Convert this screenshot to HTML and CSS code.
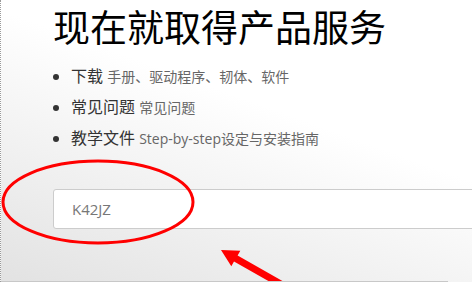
FILE: index.html
```html
<!DOCTYPE html>
<html lang="zh-CN">
<head>
  <meta charset="UTF-8">
  <title>产品服务</title>
  <link rel="stylesheet" href="styles.css">
</head>
<body>
  <div class="page">
    <h1 class="title">现在就取得产品服务</h1>
    <ul class="links">
      <li><span class="main">下载</span> <span class="sub">手册、驱动程序、韧体、软件</span></li>
      <li><span class="main">常见问题</span> <span class="sub">常见问题</span></li>
      <li><span class="main">教学文件</span> <span class="sub">Step-by-step设定与安装指南</span></li>
    </ul>
    <div class="search">
      <input class="search-input" type="text" value="K42JZ">
    </div>

    <svg class="marks" width="472" height="282" viewBox="0 0 472 282">
      <ellipse cx="97" cy="202" rx="95" ry="41" fill="none" stroke="#ff0000" stroke-width="3"/>
      <polygon fill="#ff0000" points="220,250 239.3,250.7 236.6,255.5 292,287 288.5,293 233,261.5 230.3,266.3"/>
    </svg>
  </div>
</body>
</html>
```

FILE: styles.css
```css
body {
  margin: 0;
  padding: 0;
  background: #ffffff;
  font-family: "Open Sans", "Noto Sans CJK SC", sans-serif;
  overflow: hidden;
}

.page {
  position: relative;
  width: 472px;
  height: 282px;
  box-sizing: border-box;
  padding: 8px 0 0 52px;
  border-left: 1px dotted #9a9a9a;
  background: linear-gradient(200deg, #ffffff 40%, #f3f3f3 65%, #e2e2e2 100%);
  overflow: hidden;
}

.page::after {
  content: "";
  position: absolute;
  left: 0;
  bottom: 0;
  width: 447px;
  height: 1px;
  background: #c8c8c8;
}

.title {
  margin: 0;
  font-size: 37px;
  line-height: 40px;
  font-weight: normal;
  color: #000000;
  white-space: nowrap;
}

.links {
  margin: 13px 0 0 0;
  padding: 0 0 0 18px;
  list-style: disc;
  color: #333333;
}

.links li {
  line-height: 31px;
  white-space: nowrap;
}

.links .main {
  font-size: 16px;
  color: #333333;
}

.links .sub {
  font-size: 14px;
  color: #666666;
}

.search {
  margin-top: 35px;
}

.search-input {
  box-sizing: border-box;
  width: 440px;
  height: 40px;
  padding: 0 18px;
  border: 1px solid #cccccc;
  border-radius: 3px;
  background: #ffffff;
  font-family: "Open Sans", sans-serif;
  font-size: 15px;
  color: #777777;
  outline: none;
}

.marks {
  position: absolute;
  left: 0;
  top: 0;
  pointer-events: none;
}
```
